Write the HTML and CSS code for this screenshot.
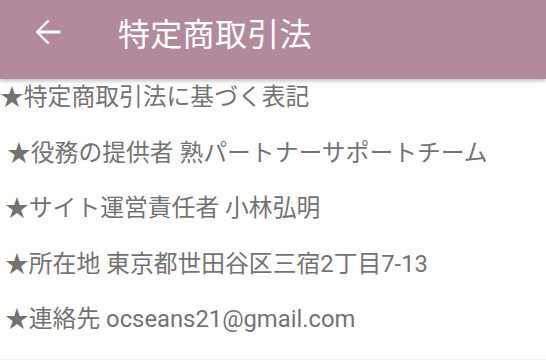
FILE: index.html
```html
<!DOCTYPE html>
<html lang="ja">
<head>
<meta charset="utf-8">
<link rel="stylesheet" href="styles.css">
</head>
<body>
<header class="appbar">
  <span class="back">
    <svg width="40" height="40" viewBox="0 0 24 24"><path d="M20 11.1H7.83l5.59-5.59L12.5 4.6l-7.4 7.4 7.4 7.4.92-.92L7.83 12.9H20v-1.8z" fill="#fff"/></svg>
  </span>
  <h1 class="title">特定商取引法</h1>
</header>
<main class="content">
  <p class="row first">★特定商取引法に基づく表記</p>
  <p class="row second">★役務の提供者 熟パートナーサポートチーム</p>
  <p class="row">★サイト運営責任者 小林弘明</p>
  <p class="row">★所在地 東京都世田谷区三宿2丁目7-13</p>
  <p class="row">★連絡先 ocseans21@gmail.com</p>
</main>
</body>
</html>
```

FILE: styles.css
```css
html, body {
  margin: 0;
  padding: 0;
  background: #fff;
  width: 546px;
  height: 360px;
  overflow: hidden;
  font-family: Roboto, "Noto Sans CJK JP", sans-serif;
}
.appbar {
  height: 79px;
  background: #b38a9c;
  display: flex;
  align-items: center;
  box-shadow: 0 2px 4px rgba(0,0,0,0.25);
  position: relative;
  z-index: 1;
}
.back {
  width: 40px;
  height: 40px;
  margin-left: 27px;
  margin-top: -16px;
  display: flex;
}
.title {
  margin: -16px 0 0 51px;
  color: #fff;
  font-size: 32px;
  font-weight: 400;
  letter-spacing: 0.3px;
}
.content {
  display: flex;
  flex-direction: column;
  gap: 23.5px;
  padding-top: 2px;
  height: 278px;
  border-bottom: 1px solid #f4f4f4;
}
.row {
  margin: 0;
  color: #737373;
  font-size: 23.8px;
  line-height: 32px;
  padding-left: 5px;
  white-space: nowrap;
}
.row.first { padding-left: 0; }
.row.second { padding-left: 7px; }
```
